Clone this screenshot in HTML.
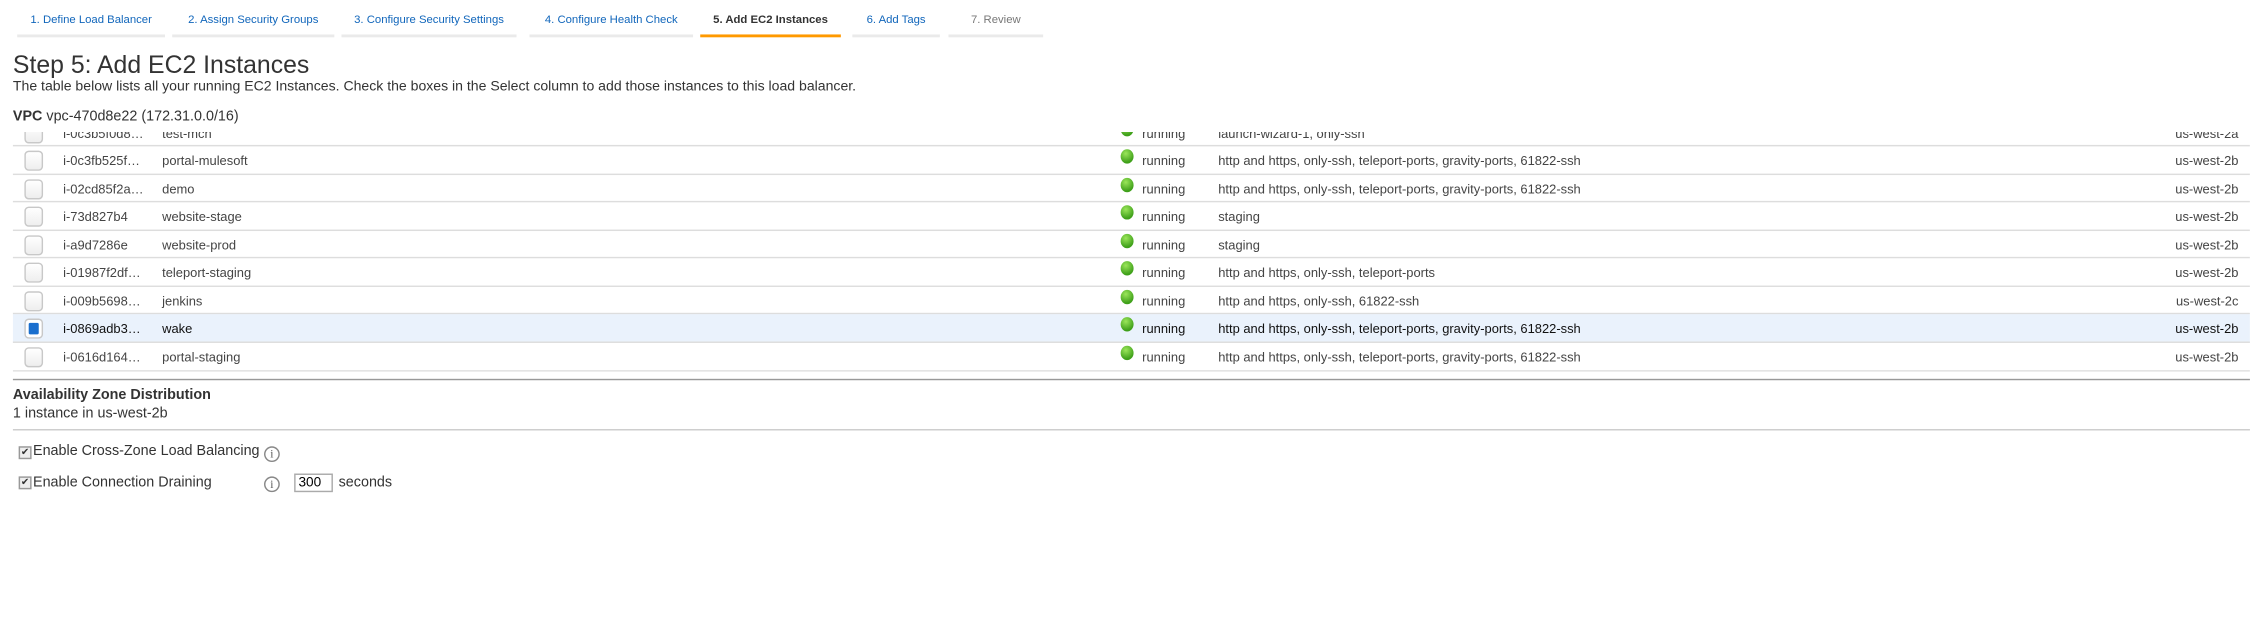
<!DOCTYPE html>
<html><head><meta charset="utf-8"><style>
html,body{margin:0;padding:0;background:#fff;overflow:hidden;width:2250px;height:624px}
#w{position:absolute;left:0;top:0;width:1568px;height:435px;transform:scale(1.4349);transform-origin:0 0;font-family:"Liberation Sans",Arial,sans-serif;color:#333}
.a{position:absolute;white-space:nowrap}
.tab{position:absolute;top:8px;height:16px;border-bottom:2px solid #eaeaea;font-size:7.9px;color:#1166bb;text-align:center;line-height:12px}
.tab.on{border-bottom-color:#f90;color:#333;font-weight:bold}
.tab.off{color:#777}
.row{position:absolute;left:9px;width:1559px;box-sizing:border-box;border-bottom:1px solid #ddd;font-size:9px;color:#444}
.row span{position:absolute;top:5px;white-space:nowrap}
.cb{position:absolute;left:8px;top:3px;width:11px;height:12px;border:1px solid #c8c8c8;border-radius:3px;background:linear-gradient(#fff,#eee)}
.dot{position:absolute;left:772px;top:2px;width:9px;height:10px;border-radius:50%;background:radial-gradient(circle at 40% 30%,#9be65a,#3fa01a 70%)}
.info{position:absolute;width:9px;height:9px;border:1px solid #888;border-radius:50%;font-size:8px;line-height:9px;text-align:center;color:#555;font-family:"Liberation Serif",serif}
.ck{position:absolute;width:7px;height:7px;border:1px solid #999;background:#eee;font-size:7px;line-height:7px;text-align:center;color:#333}
</style></head><body><div id="w">
<div class="tab" style="left:12px;width:103px">1. Define Load Balancer</div>
<div class="tab" style="left:120px;width:113px">2. Assign Security Groups</div>
<div class="tab" style="left:238px;width:122px">3. Configure Security Settings</div>
<div class="tab" style="left:369px;width:114px">4. Configure Health Check</div>
<div class="tab on" style="left:488px;width:98px">5. Add EC2 Instances</div>
<div class="tab" style="left:594px;width:61px">6. Add Tags</div>
<div class="tab off" style="left:661px;width:66px">7. Review</div>

<div class="a" style="left:9px;top:35px;font-size:17.3px;color:#333">Step 5: Add EC2 Instances</div>
<div class="a" style="left:9px;top:55px;font-size:9.8px">The table below lists all your running EC2 Instances. Check the boxes in the Select column to add those instances to this load balancer.</div>
<div class="a" style="left:9px;top:76px;font-size:10px"><b>VPC</b> vpc-470d8e22 (172.31.0.0/16)</div>

<div style="position:absolute;left:0;top:92px;width:1568px;height:167px;overflow:hidden">
<div style="position:absolute;left:0;top:-92px;width:1568px;height:400px">
<div class="row" style="top:83px;height:19px"><div class="cb"></div><span style="left:35px">i-0c3b5f0d8…</span><span style="left:104px">test-mch</span><div class="dot"></div><span style="left:787px">running</span><span style="left:840px">launch-wizard-1, only-ssh</span><span style="right:8px">us-west-2a</span></div>
<div class="row" style="top:102px;height:20px"><div class="cb"></div><span style="left:35px">i-0c3fb525f…</span><span style="left:104px">portal-mulesoft</span><div class="dot"></div><span style="left:787px">running</span><span style="left:840px">http and https, only-ssh, teleport-ports, gravity-ports, 61822-ssh</span><span style="right:8px">us-west-2b</span></div>
<div class="row" style="top:122px;height:19px"><div class="cb"></div><span style="left:35px">i-02cd85f2a…</span><span style="left:104px">demo</span><div class="dot"></div><span style="left:787px">running</span><span style="left:840px">http and https, only-ssh, teleport-ports, gravity-ports, 61822-ssh</span><span style="right:8px">us-west-2b</span></div>
<div class="row" style="top:141px;height:20px"><div class="cb"></div><span style="left:35px">i-73d827b4</span><span style="left:104px">website-stage</span><div class="dot"></div><span style="left:787px">running</span><span style="left:840px">staging</span><span style="right:8px">us-west-2b</span></div>
<div class="row" style="top:161px;height:19px"><div class="cb"></div><span style="left:35px">i-a9d7286e</span><span style="left:104px">website-prod</span><div class="dot"></div><span style="left:787px">running</span><span style="left:840px">staging</span><span style="right:8px">us-west-2b</span></div>
<div class="row" style="top:180px;height:20px"><div class="cb"></div><span style="left:35px">i-01987f2df…</span><span style="left:104px">teleport-staging</span><div class="dot"></div><span style="left:787px">running</span><span style="left:840px">http and https, only-ssh, teleport-ports</span><span style="right:8px">us-west-2b</span></div>
<div class="row" style="top:200px;height:19px"><div class="cb"></div><span style="left:35px">i-009b5698…</span><span style="left:104px">jenkins</span><div class="dot"></div><span style="left:787px">running</span><span style="left:840px">http and https, only-ssh, 61822-ssh</span><span style="right:8px">us-west-2c</span></div>
<div class="row" style="top:219px;height:20px;background:#eaf2fc;color:#111"><div class="cb" style="background:#fff"><div style="position:absolute;left:2px;top:2px;width:7px;height:8px;background:#1a6fce;border-radius:1px"></div></div><span style="left:35px">i-0869adb3…</span><span style="left:104px">wake</span><div class="dot"></div><span style="left:787px">running</span><span style="left:840px">http and https, only-ssh, teleport-ports, gravity-ports, 61822-ssh</span><span style="right:8px">us-west-2b</span></div>
<div class="row" style="top:239px;height:20px"><div class="cb"></div><span style="left:35px">i-0616d164…</span><span style="left:104px">portal-staging</span><div class="dot"></div><span style="left:787px">running</span><span style="left:840px">http and https, only-ssh, teleport-ports, gravity-ports, 61822-ssh</span><span style="right:8px">us-west-2b</span></div>
</div></div>
<div style="position:absolute;left:9px;top:264px;width:1559px;height:1px;background:#999"></div>

<div class="a" style="left:9px;top:270px;font-size:10px;font-weight:bold">Availability Zone Distribution</div>
<div class="a" style="left:9px;top:283px;font-size:10px">1 instance in us-west-2b</div>
<div style="position:absolute;left:9px;top:299px;width:1559px;height:1px;background:#ccc"></div>

<div class="ck" style="left:13px;top:311px">✔</div>
<div class="a" style="left:23px;top:309px;font-size:10px">Enable Cross-Zone Load Balancing</div>
<div class="info" style="left:184px;top:311px">i</div>
<div class="ck" style="left:13px;top:332px">✔</div>
<div class="a" style="left:23px;top:331px;font-size:10px">Enable Connection Draining</div>
<div class="info" style="left:184px;top:332px">i</div>
<div style="position:absolute;left:205px;top:330px;width:27px;height:13px;border:1px solid #aaa;box-sizing:border-box;font-size:9.5px;line-height:11px;padding-left:2px;color:#000">300</div>
<div class="a" style="left:236px;top:331px;font-size:10px">seconds</div>
</div></body></html>
